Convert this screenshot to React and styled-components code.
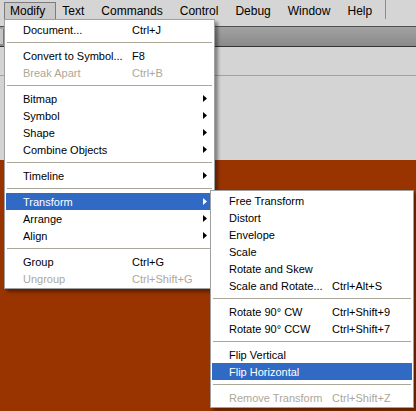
import React from 'react'
import styled, { createGlobalStyle } from 'styled-components'

const GlobalStyle = createGlobalStyle`
  html, body {
    margin: 0;
    padding: 0;
    background: #d4d4d4;
  }
  body {
    width: 416px;
    height: 411px;
    overflow: hidden;
    font-family: 'Liberation Sans', Arial, sans-serif;
  }
`

const Screen = styled.div`
  position: relative;
  width: 416px;
  height: 411px;
  display: flex;
  flex-direction: column;
  background: #d4d4d4;
  overflow: hidden;
`

const MenuBar = styled.div`
  height: 26px;
  box-sizing: border-box;
  padding: 2px 0 0 4px;
  display: flex;
  align-items: flex-start;
  background: #d5d5d5;
  font-size: 12px;
  color: #000;
`

const MenuTitle = styled.div`
  height: 18px;
  line-height: 17px;
  padding: 0 10px 0 5px;
  border: 1px solid ${({ $open }) => ($open ? '#7c7c7c' : 'transparent')};
  border-bottom: none;
  background: ${({ $open }) => ($open ? '#c9c9c9' : 'transparent')};
  white-space: nowrap;
`

const BarDivider = styled.div`
  width: 1px;
  height: 19px;
  margin: -2px 30px 0 auto;
  background: #8a8a8a;
`

const Toolbar = styled.div`
  height: 21px;
  box-sizing: border-box;
  border-top: 1px solid #505050;
  border-bottom: 1px solid #333;
  background: linear-gradient(#a2a2a2, #8a8a8a);
  display: flex;
  align-items: center;
`

const ToolbarGrip = styled.div`
  width: 3px;
  height: 15px;
  background: #c4c4c4;
  border-right: 1px solid #777;
`

const PropertyStrip = styled.div`
  height: 29px;
  box-sizing: border-box;
  border-bottom: 1px solid #a2a2a2;
  background: #d4d4d4;
`

const Workspace = styled.div`
  height: 84px;
  background: #d4d4d4;
`

const Stage = styled.div`
  flex: 1;
  background: #993300;
`

const Menu = styled.div`
  position: absolute;
  left: ${({ $left }) => $left};
  top: ${({ $top }) => $top};
  width: ${({ $width }) => $width}px;
  box-sizing: border-box;
  padding: 1px;
  background: #fff;
  border: 1px solid #a0a0a0;
  box-shadow: 3px 3px 3px rgba(0, 0, 0, 0.38);
  font-size: 11px;
  z-index: ${({ $layer }) => $layer};
`

const Item = styled.div`
  position: relative;
  display: flex;
  align-items: center;
  height: 17px;
  padding-left: 17px;
  white-space: nowrap;
  color: ${({ $disabled, $active }) => ($disabled ? '#aca899' : $active ? '#fff' : '#000')};
  background: ${({ $active }) => ($active ? '#316ac5' : 'transparent')};
`

const Label = styled.span`
  width: ${({ $w }) => $w}px;
  flex-shrink: 0;
`

const Shortcut = styled.span`
  flex: 1;
`

const ArrowIcon = styled.svg`
  width: 4px;
  height: 7px;
  margin-right: 6px;
  flex-shrink: 0;
`

const Separator = styled.div`
  height: 1px;
  margin: 4px 1px;
  background: #aca899;
`

const MODIFY = [
  { label: 'Document...', key: 'Ctrl+J' },
  { sep: true },
  { label: 'Convert to Symbol...', key: 'F8' },
  { label: 'Break Apart', key: 'Ctrl+B', disabled: true },
  { sep: true },
  { label: 'Bitmap', sub: true },
  { label: 'Symbol', sub: true },
  { label: 'Shape', sub: true },
  { label: 'Combine Objects', sub: true },
  { sep: true },
  { label: 'Timeline', sub: true },
  { sep: true },
  { label: 'Transform', sub: true, active: true, children: true },
  { label: 'Arrange', sub: true },
  { label: 'Align', sub: true },
  { sep: true },
  { label: 'Group', key: 'Ctrl+G' },
  { label: 'Ungroup', key: 'Ctrl+Shift+G', disabled: true },
]

const TRANSFORM = [
  { label: 'Free Transform' },
  { label: 'Distort' },
  { label: 'Envelope' },
  { label: 'Scale' },
  { label: 'Rotate and Skew' },
  { label: 'Scale and Rotate...', key: 'Ctrl+Alt+S' },
  { sep: true },
  { label: 'Rotate 90° CW', key: 'Ctrl+Shift+9' },
  { label: 'Rotate 90° CCW', key: 'Ctrl+Shift+7' },
  { sep: true },
  { label: 'Flip Vertical' },
  { label: 'Flip Horizontal', active: true },
  { sep: true },
  { label: 'Remove Transform', key: 'Ctrl+Shift+Z', disabled: true },
]

const TITLES = ['Modify', 'Text', 'Commands', 'Control', 'Debug', 'Window', 'Help']

const Arrow = ({ color }) => (
  <ArrowIcon viewBox="0 0 4 7">
    <polygon points="0,0 4,3.5 0,7" fill={color} />
  </ArrowIcon>
)

const MenuItems = ({ items, labelWidth, submenu }) =>
  items.map((item, i) =>
    item.sep ? (
      <Separator key={i} />
    ) : (
      <Item key={i} $active={item.active} $disabled={item.disabled}>
        <Label $w={labelWidth}>{item.label}</Label>
        <Shortcut>{item.key}</Shortcut>
        {item.sub && <Arrow color={item.active ? '#fff' : '#000'} />}
        {item.children && submenu}
      </Item>
    )
  )

const App = () => {
  const transformMenu = (
    <Menu $left="calc(100% - 3px)" $top="-3px" $width={204} $layer={3}>
      <MenuItems items={TRANSFORM} labelWidth={103} />
    </Menu>
  )

  return (
    <Screen>
      <GlobalStyle />
      <MenuBar>
        {TITLES.map((t, i) => (
          <MenuTitle key={t} $open={i === 0}>{t}</MenuTitle>
        ))}
        <BarDivider />
      </MenuBar>
      <Toolbar>
        <ToolbarGrip />
      </Toolbar>
      <PropertyStrip />
      <Workspace />
      <Stage />

      <Menu $left="4px" $top="19px" $width={211} $layer={2}>
        <MenuItems items={MODIFY} labelWidth={109} submenu={transformMenu} />
      </Menu>
    </Screen>
  )
}

export default App
